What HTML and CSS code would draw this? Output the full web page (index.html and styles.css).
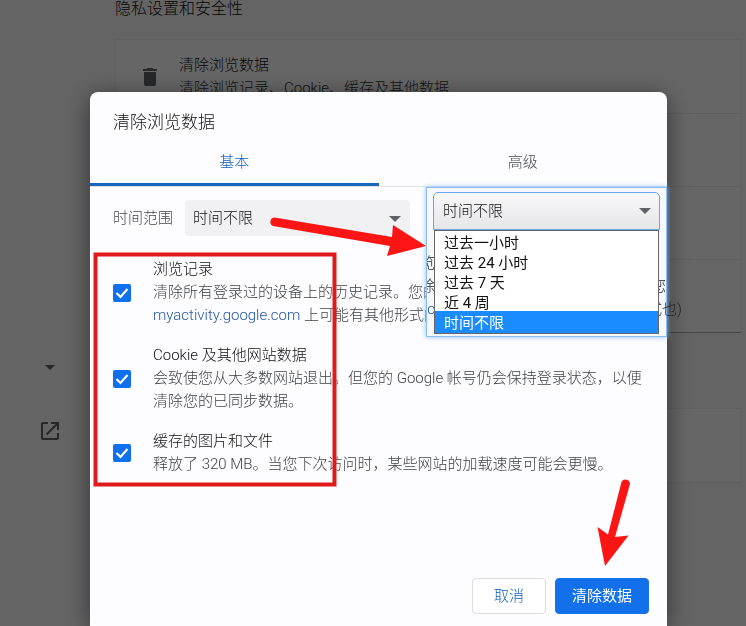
FILE: index.html
```html
<!DOCTYPE html>
<html lang="zh-CN">
<head>
  <meta charset="UTF-8">
  <title>清除浏览数据</title>
  <link rel="stylesheet" href="styles.css">
</head>
<body>
  <div class="page">
    <aside class="sidebar">
      <svg class="caret" width="10" height="5" viewBox="0 0 10 5"><path d="M0 0h10L5 5z"/></svg>
      <svg class="open-icon" width="24" height="24" viewBox="0 0 24 24"><path d="M19 19H5V5h5V3H5a2 2 0 0 0-2 2v14a2 2 0 0 0 2 2h14c1.1 0 2-.9 2-2v-5h-2v5zM13 3v2h4.600l-9.800 9.800 1.400 1.400L19 6.400V11h2V3h-8z"/></svg>
    </aside>
    <main class="settings">
      <h2>隐私设置和安全性</h2>
      <div class="card">
        <div class="card-row">
          <svg class="trash" width="24" height="24" viewBox="0 0 24 24"><path d="M6 19a2 2 0 0 0 2 2h8a2 2 0 0 0 2-2V7H6v12zM19 4h-3.500l-1-1h-5l-1 1H5v2h14V4z"/></svg>
          <div>
            <div class="row-title">清除浏览数据</div>
            <div class="row-sub">清除浏览记录、Cookie、缓存及其他数据</div>
          </div>
        </div>
        <div class="card-row"></div>
        <div class="card-row"></div>
        <div class="card-row"></div>
      </div>
      <div class="card card-second">
        <div class="card-row"></div>
      </div>
    </main>
  </div>

  <div class="overlay">
    <div class="dialog" role="dialog" aria-labelledby="dialogTitle">
      <h1 id="dialogTitle">清除浏览数据</h1>
      <div class="tabs" role="tablist">
        <button class="tab active" role="tab" aria-selected="true">基本</button>
        <button class="tab" role="tab" aria-selected="false">高级</button>
      </div>

      <div class="range">
        <label for="timeRange">时间范围</label>
        <div class="select-wrap">
          <select id="timeRange">
            <option>时间不限</option>
          </select>
          <svg class="caret" width="12" height="6" viewBox="0 0 12 6"><path d="M0 0h12L6 6z"/></svg>
        </div>
      </div>

      <div class="options">
        <div class="option">
          <input type="checkbox" id="history" checked>
          <div class="option-text">
            <label for="history">浏览记录</label>
            <p>清除所有登录过的设备上的历史记录。您的<br><a href="#">myactivity.google.com</a> 上可能有其他形式的</p>
          </div>
        </div>
        <div class="option">
          <input type="checkbox" id="cookies" checked>
          <div class="option-text">
            <label for="cookies">Cookie 及其他网站数据</label>
            <p>会致使您从大多数网站退出。但您的 Google 帐号仍会保持登录状态，以便清除您的已同步数据。</p>
          </div>
        </div>
        <div class="option">
          <input type="checkbox" id="cache" checked>
          <div class="option-text">
            <label for="cache">缓存的图片和文件</label>
            <p>释放了 320 MB。当您下次访问时，某些网站的加载速度可能会更慢。</p>
          </div>
        </div>
      </div>

      <div class="buttons">
        <button class="cancel">取消</button>
        <button class="confirm">清除数据</button>
      </div>

      <!-- 展开的时间范围菜单 -->
      <div class="picker">
        <div class="picker-back">
          <div><span class="cut">览</span></div>
          <div><span class="cut">除</span><span class="inside">您</span></div>
          <div><span class="cut link">ac</span><span>式也)</span></div>
        </div>
        <div class="picker-menu">
          <div class="select-wrap">
            <select id="openRange" aria-label="时间范围">
              <option>时间不限</option>
            </select>
            <svg class="caret" width="12" height="6" viewBox="0 0 12 6"><path d="M0 0h12L6 6z"/></svg>
          </div>
          <select class="list" size="5" aria-label="时间范围选项">
            <option>过去一小时</option>
            <option>过去 24 小时</option>
            <option>过去 7 天</option>
            <option>近 4 周</option>
            <option selected>时间不限</option>
          </select>
        </div>
      </div>

      <!-- 红色标注 -->
      <svg class="marks" width="577" height="534" viewBox="90 92 577 534">
        <rect x="95.500" y="254.500" width="239" height="230" fill="none" stroke="#e01a1a" stroke-width="4"/>
        <path d="M274 217.500a4.500 4.500 0 0 0-1 8.500L390 246l-3 10 39-10-33-21-1 12L274.500 217.500z" fill="#fb1515"/>
        <path d="M621.500 482a4.500 4.500 0 0 1 8.500 2L615 537l13.500-1.500L605 566l-7.500-39 10.500 7.500L621.500 482z" fill="#fb1515"/>
      </svg>
    </div>
  </div>
</body>
</html>
```

FILE: styles.css
```css
* {
  box-sizing: border-box;
}
body {
  margin: 0;
  height: 100vh;
  overflow: hidden;
  font-family: Roboto, "Noto Sans CJK SC", sans-serif;
  font-size: 15px;
  font-weight: 300;
  line-height: 23px;
  color: #111;
  background-color: #fafafa;
}
h1, h2, p {
  margin: 0;
  font-weight: 300;
}
button, select {
  font: inherit;
}

/* 背景设置页 */
.page {
  display: flex;
}
.sidebar {
  width: 115px;
  padding: 365px 16px 0 0;
  display: flex;
  flex-direction: column;
  align-items: center;
  gap: 49px;
  fill: #5f6368;
}
.settings {
  flex: 1;
  padding-right: 5px;
}
.settings h2 {
  font-size: 16px;
  line-height: 18px;
  margin-bottom: 21px;
}
.card {
  background: #fff;
  border: 1px solid #f0f0f0;
  border-bottom-color: #aaa;
}
.card-second {
  margin-top: 75px;
  border-bottom-color: #eee;
}
.card-row {
  display: flex;
  align-items: center;
  height: 73px;
  padding-left: 22px;
  gap: 17px;
}
.card-row + .card-row {
  border-top: 1px solid #eee;
}
.row-sub {
  color: #333;
}
.trash {
  fill: #5f6368;
}

/* 弹窗 */
.overlay {
  position: fixed;
  inset: 0;
  display: flex;
  padding: 92px 79px 0 90px;
  background: rgba(0, 0, 0, 0.6);
}
.dialog {
  position: relative;
  flex: 1;
  display: flex;
  flex-direction: column;
  padding-bottom: 12px;
  background: #fdfcfe;
  border-radius: 8px 8px 0 0;
  box-shadow: 0 4px 24px rgba(0, 0, 0, 0.5);
}
.dialog h1 {
  padding: 18px 23px 0;
  font-size: 17px;
  line-height: 24px;
}
.tabs {
  display: flex;
  margin-top: 4px;
  border-bottom: 1px solid #dfe1e5;
}
.tab {
  flex: 1;
  height: 48px;
  padding: 4px 0 0;
  border: none;
  border-bottom: 3px solid transparent;
  background: none;
  color: #45484c;
}
.tab.active {
  color: #1260bb;
  border-bottom-color: #1a66bd;
}
.range {
  display: flex;
  align-items: center;
  gap: 12px;
  margin-top: 13px;
  padding-left: 23px;
  color: #45484c;
}
.select-wrap {
  position: relative;
}
.select-wrap select {
  display: block;
  width: 225px;
  height: 36px;
  padding: 0 8px;
  border: none;
  border-radius: 4px;
  appearance: none;
  background: #f1f1f3;
  color: #111;
}
.select-wrap .caret {
  position: absolute;
  right: 9px;
  top: 16px;
  fill: #5f6368;
}

/* 选项 */
.options {
  display: flex;
  flex-direction: column;
  gap: 17px;
  margin-top: 22px;
  padding: 0 23px;
}
.option {
  display: flex;
  align-items: center;
  gap: 22px;
}
.option input {
  flex: none;
  width: 18px;
  height: 18px;
  margin: 0;
  border-radius: 2px;
  appearance: none;
  background: #1a73e8;
}
.option input:checked {
  background: #0f70ee url("data:image/svg+xml,%3Csvg xmlns='http://www.w3.org/2000/svg' viewBox='0 0 18 18'%3E%3Cpath d='M3.500 9l4 4 7-8' fill='none' stroke='white' stroke-width='2.200'/%3E%3C/svg%3E");
}
.option-text p {
  color: #3f4246;
}
.option-text a,
.link {
  color: #2458a8;
  text-decoration: none;
}

.buttons {
  display: flex;
  justify-content: flex-end;
  gap: 9px;
  margin-top: auto;
  padding-right: 18px;
}
.buttons button {
  height: 36px;
  padding: 0 16px;
  border: 1px solid #dadce0;
  border-radius: 4px;
  background: #fff;
  color: #1260bb;
}
.buttons .cancel {
  padding: 0 21px;
}
.buttons .confirm {
  border-color: #1a73e8;
  background: #1270ea;
  color: #fff;
  font-weight: 400;
}

/* 展开菜单，盖在弹窗内容上 */
.picker {
  position: absolute;
  top: 95px;
  right: 0;
  width: 241px;
  height: 150px;
  padding: 4px 6px;
  border: 1px solid #8abdf5;
  background: #f7f8fd;
  box-shadow: 0 0 5px #8abdf5;
}
.picker-back {
  position: absolute;
  inset: 64px -16px 0 0;
  color: #222;
}
.picker-back div {
  display: flex;
  justify-content: space-between;
}
.cut {
  display: flex;
  justify-content: flex-end;
  width: 8px;
  overflow: hidden;
}
.inside {
  margin-right: 16px;
}
.picker-menu {
  position: relative;
  width: 227px;
}
.picker-menu .select-wrap select {
  width: 100%;
  height: 38px;
  padding: 0 9px;
  border: 1px solid #6ba5e7;
  border-radius: 5px 5px 0 0;
  background: linear-gradient(#f8f8f9, #e6e6e9);
}
.list {
  display: block;
  width: 225px;
  height: 104px;
  margin: 0 1px;
  padding: 0;
  border: 1px solid #666;
  border-radius: 0;
  overflow: hidden;
  background: #fff;
  color: #111;
}
.list option {
  height: 20px;
  min-height: 20px;
  padding: 0 9px;
  line-height: 20px;
}
.list option:checked {
  height: 22px;
  background: #1a8cff;
  color: #fff;
}

.marks {
  position: absolute;
  left: 0;
  top: 0;
  pointer-events: none;
}
```
